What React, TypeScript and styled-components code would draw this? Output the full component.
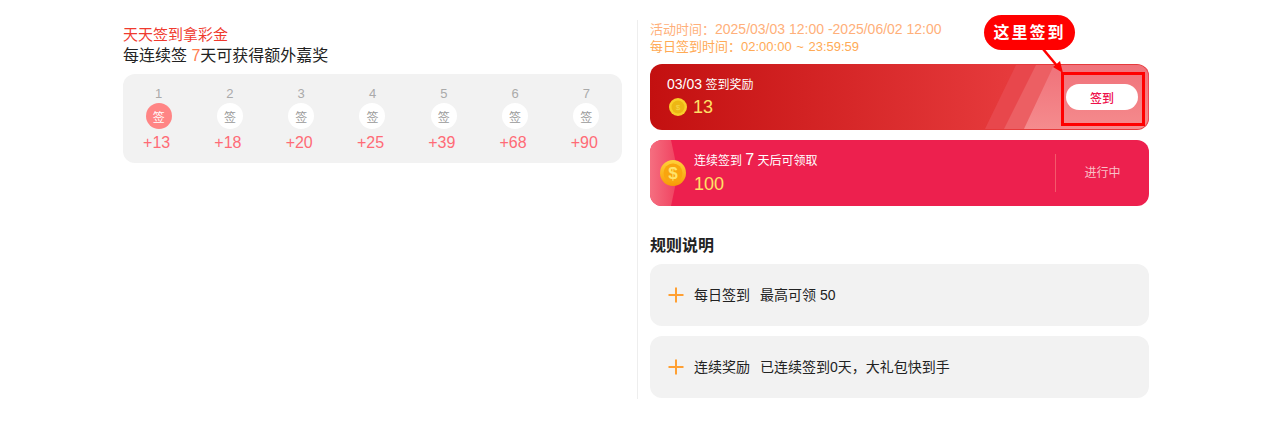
import { createGlobalStyle, styled } from "styled-components";

const days = [
  { day: 1, bonus: 13, active: true },
  { day: 2, bonus: 18 },
  { day: 3, bonus: 20 },
  { day: 4, bonus: 25 },
  { day: 5, bonus: 39 },
  { day: 6, bonus: 68 },
  { day: 7, bonus: 90 },
];

export default function App(): JSX.Element {
  return (
    <>
      <GlobalStyle />
      <Page>
        <LeftColumn>
          <Title>天天签到拿彩金</Title>
          <Subtitle>
            每连续签 <Accent>7</Accent>天可获得额外嘉奖
          </Subtitle>
          <DayGrid>
            {days.map((d) => (
              <DayCell key={d.day}>
                <DayNumber>{d.day}</DayNumber>
                <DayBadge $active={d.active}>签</DayBadge>
                <DayBonus>+{d.bonus}</DayBonus>
              </DayCell>
            ))}
          </DayGrid>
        </LeftColumn>

        <RightColumn>
          <TimeLine>
            <TimeLabel>活动时间：</TimeLabel>2025/03/03 12:00 -2025/06/02 12:00
          </TimeLine>
          <TimeLine $strong>
            <TimeLabel>每日签到时间：</TimeLabel>02:00:00 ~ 23:59:59
          </TimeLine>

          <DailyCard>
            <StripeLayer>
              <svg width="499" height="66" viewBox="0 0 499 66" preserveAspectRatio="none">
                <defs>
                  <linearGradient id="pink" x1="0" y1="0" x2="0" y2="1">
                    <stop offset="0" stopColor="#f0727a" />
                    <stop offset="1" stopColor="#f58c8e" />
                  </linearGradient>
                </defs>
                <polygon points="365,0 499,0 499,66 333,66" fill="#e8474c" />
                <polygon points="385,0 499,0 499,66 352,66" fill="#ec5f63" />
                <polygon points="403,0 499,0 499,66 372,66" fill="url(#pink)" />
              </svg>
            </StripeLayer>
            <CardBody>
              <CardTitle>
                <BigDate>03/03</BigDate> 签到奖励
              </CardTitle>
              <AmountRow>
                <svg width="18" height="18" viewBox="0 0 18 18">
                  <circle cx="9" cy="9" r="9" fill="#f9ce2a" />
                  <circle cx="9" cy="9" r="6.5" fill="#edb714" />
                  <text x="9" y="12" textAnchor="middle" fontSize="8" fill="#f7d64a" fontFamily="Liberation Sans">$</text>
                </svg>
                <Amount>13</Amount>
              </AmountRow>
            </CardBody>
            <SignButton>签到</SignButton>

            <HighlightBox />
            <CalloutArrow width="24" height="26" viewBox="0 0 24 26">
              <line x1="1" y1="0" x2="16" y2="18" stroke="#ff0000" strokeWidth="2.5" />
              <polygon points="21,24 11,18 18,12" fill="#ff0000" />
            </CalloutArrow>
            <Callout>这里签到</Callout>
          </DailyCard>

          <StreakCard>
            <StreakFlare>
              <svg width="30" height="66" viewBox="0 0 30 66">
                <defs>
                  <linearGradient id="flare" x1="0" y1="0" x2="1" y2="0">
                    <stop offset="0" stopColor="#f56f80" />
                    <stop offset="1" stopColor="#f0405f" />
                  </linearGradient>
                </defs>
                <polygon points="0,0 21,0 28,33 21,66 0,66" fill="url(#flare)" />
              </svg>
            </StreakFlare>
            <CoinSlot>
              <svg width="26" height="26" viewBox="0 0 26 26">
                <defs>
                  <linearGradient id="coin" x1="0" y1="0" x2="0" y2="1">
                    <stop offset="0" stopColor="#ffd23a" />
                    <stop offset="1" stopColor="#f79a06" />
                  </linearGradient>
                </defs>
                <circle cx="13" cy="13" r="13" fill="url(#coin)" />
                <circle cx="13" cy="13" r="9.5" fill="#f9a50e" />
                <text x="13" y="19" textAnchor="middle" fontSize="17" fontWeight="700" fill="#ffe36a" fontFamily="Liberation Sans">$</text>
              </svg>
            </CoinSlot>
            <StreakBody>
              <CardTitle>
                连续签到 <BigSeven>7</BigSeven> 天后可领取
              </CardTitle>
              <Amount>100</Amount>
            </StreakBody>
            <StreakStatus>进行中</StreakStatus>
          </StreakCard>

          <RulesHeading>规则说明</RulesHeading>
          <RuleRow>
            <PlusIcon />
            <RuleText>
              <RuleLabel>每日签到</RuleLabel>
              <span>最高可领 50</span>
            </RuleText>
          </RuleRow>
          <RuleRow>
            <PlusIcon />
            <RuleText>
              <RuleLabel>连续奖励</RuleLabel>
              <span>已连续签到0天，大礼包快到手</span>
            </RuleText>
          </RuleRow>
        </RightColumn>
      </Page>
    </>
  );
}

function PlusIcon() {
  return (
    <PlusSvg width="16" height="16" viewBox="0 0 16 16">
      <path d="M8 0.5V15.5M0.5 8H15.5" stroke="#ffa033" strokeWidth="2" fill="none" />
    </PlusSvg>
  );
}

const GlobalStyle = createGlobalStyle`
  html, body {
    margin: 0;
    padding: 0;
    background: #fff;
    overflow: hidden;
    font-family: "Liberation Sans", "Noto Sans CJK SC", sans-serif;
  }
`;

const Page = styled.div`
  display: flex;
  align-items: flex-start;
  width: 1280px;
  height: 426px;
  box-sizing: border-box;
  padding: 20px 0 0 123px;
`;

const LeftColumn = styled.div`
  width: 499px;
  margin-right: 15px;
  padding-top: 6px;
`;

const Title = styled.div`
  font-size: 15px;
  line-height: 18px;
  color: #f03a2e;
`;

const Subtitle = styled.div`
  margin-top: 1px;
  font-size: 16px;
  line-height: 22px;
  color: #222;
`;

const Accent = styled.span`
  color: #ff7a4d;
`;

const DayGrid = styled.div`
  display: grid;
  grid-template-columns: repeat(7, 1fr);
  height: 89px;
  margin-top: 7px;
  border-radius: 12px;
  background: #f2f2f2;
`;

const DayCell = styled.div`
  display: flex;
  flex-direction: column;
  align-items: center;
  padding-top: 12px;
`;

const DayNumber = styled.div`
  font-size: 13px;
  line-height: 15px;
  color: #aaa;
`;

const DayBadge = styled.div<{ $active?: boolean }>`
  display: flex;
  align-items: center;
  justify-content: center;
  width: 26px;
  height: 26px;
  margin-top: 2px;
  border-radius: 50%;
  font-size: 12px;
  background: ${(p) => (p.$active ? "#ff8585" : "#fff")};
  color: ${(p) => (p.$active ? "#fff" : "#999")};
`;

const DayBonus = styled.div`
  margin-top: 5px;
  padding-right: 4px;
  font-size: 16px;
  line-height: 18px;
  color: #ff6b76;
`;

const RightColumn = styled.div`
  width: 499px;
  height: 378px;
  padding: 1px 0 0 12px;
  border-left: 1px solid #eee;
`;

const TimeLine = styled.div<{ $strong?: boolean }>`
  font-size: ${(p) => (p.$strong ? "13px" : "14px")};
  line-height: 17px;
  color: ${(p) => (p.$strong ? "#ffaa55" : "#ffb07a")};
  word-spacing: ${(p) => (p.$strong ? "1px" : "0")};
`;

const TimeLabel = styled.span`
  font-size: 13px;
`;

const DailyCard = styled.div`
  position: relative;
  display: flex;
  align-items: center;
  justify-content: space-between;
  box-sizing: border-box;
  height: 66px;
  margin-top: 9px;
  padding: 0 11px 0 17px;
  border-radius: 12px;
  background: linear-gradient(90deg, #c31010, #e63a3c 72%);
`;

const StripeLayer = styled.div`
  position: absolute;
  inset: 0;
  overflow: hidden;
  border-radius: 12px;
  border: 1px solid #f04a56;
  box-sizing: border-box;
  border-left-color: transparent;
  border-top-color: transparent;
  border-bottom-color: transparent;

  svg {
    display: block;
  }
`;

const CardBody = styled.div`
  position: relative;
  display: flex;
  flex-direction: column;
  gap: 2px;
  padding-bottom: 1px;
`;

const CardTitle = styled.div`
  font-size: 12px;
  line-height: 18px;
  color: #fff;
`;

const BigDate = styled.span`
  font-size: 14px;
`;

const AmountRow = styled.div`
  display: flex;
  align-items: center;
  gap: 6px;
  padding-left: 2px;
`;

const Amount = styled.div`
  font-size: 18px;
  line-height: 22px;
  color: #ffe066;
`;

const SignButton = styled.div`
  position: relative;
  display: flex;
  align-items: center;
  justify-content: center;
  width: 72px;
  height: 26px;
  border-radius: 13px;
  background: #fff;
  font-size: 12px;
  font-weight: 500;
  color: #ee0f4a;
`;

const HighlightBox = styled.div`
  position: absolute;
  left: 411px;
  top: 8px;
  width: 84px;
  height: 54px;
  box-sizing: border-box;
  border: 3px solid #ff0000;
`;

const CalloutArrow = styled.svg`
  position: absolute;
  left: 392px;
  top: -15px;
`;

const Callout = styled.div`
  position: absolute;
  left: 334px;
  top: -49px;
  width: 91px;
  height: 35px;
  border-radius: 18px;
  background: #ff0000;
  color: #fff;
  font-size: 16px;
  font-weight: 700;
  line-height: 35px;
  letter-spacing: 2px;
  text-align: center;
`;

const StreakCard = styled.div`
  position: relative;
  display: flex;
  align-items: center;
  height: 66px;
  margin-top: 10px;
  border-radius: 12px;
  background: #ed204e;
  overflow: hidden;
`;

const StreakFlare = styled.div`
  position: absolute;
  left: 0;
  top: 0;
  height: 66px;

  svg {
    display: block;
  }
`;

const CoinSlot = styled.div`
  position: relative;
  display: flex;
  flex: none;
  margin: 0 8px 0 10px;
`;

const StreakBody = styled.div`
  flex: 1;
  display: flex;
  flex-direction: column;
  gap: 3px;
`;

const BigSeven = styled.span`
  font-size: 16px;
`;

const StreakStatus = styled.div`
  flex: none;
  width: 93px;
  height: 38px;
  line-height: 38px;
  text-align: center;
  border-left: 1px solid #f4596a;
  font-size: 12px;
  color: #f9c0c8;
`;

const RulesHeading = styled.div`
  margin-top: 29px;
  font-size: 16px;
  font-weight: 700;
  line-height: 22px;
  color: #222;
`;

const RuleRow = styled.div`
  display: flex;
  align-items: center;
  height: 62px;
  margin-top: 10px;
  padding-left: 18px;
  border-radius: 12px;
  background: #f2f2f2;
  font-size: 14px;
  color: #222;

  ${RulesHeading} + & {
    margin-top: 7px;
  }
`;

const PlusSvg = styled.svg`
  flex: none;
  margin-right: 10px;
`;

const RuleText = styled.div`
  padding-bottom: 2px;
`;

const RuleLabel = styled.span`
  margin-right: 10px;
`;
